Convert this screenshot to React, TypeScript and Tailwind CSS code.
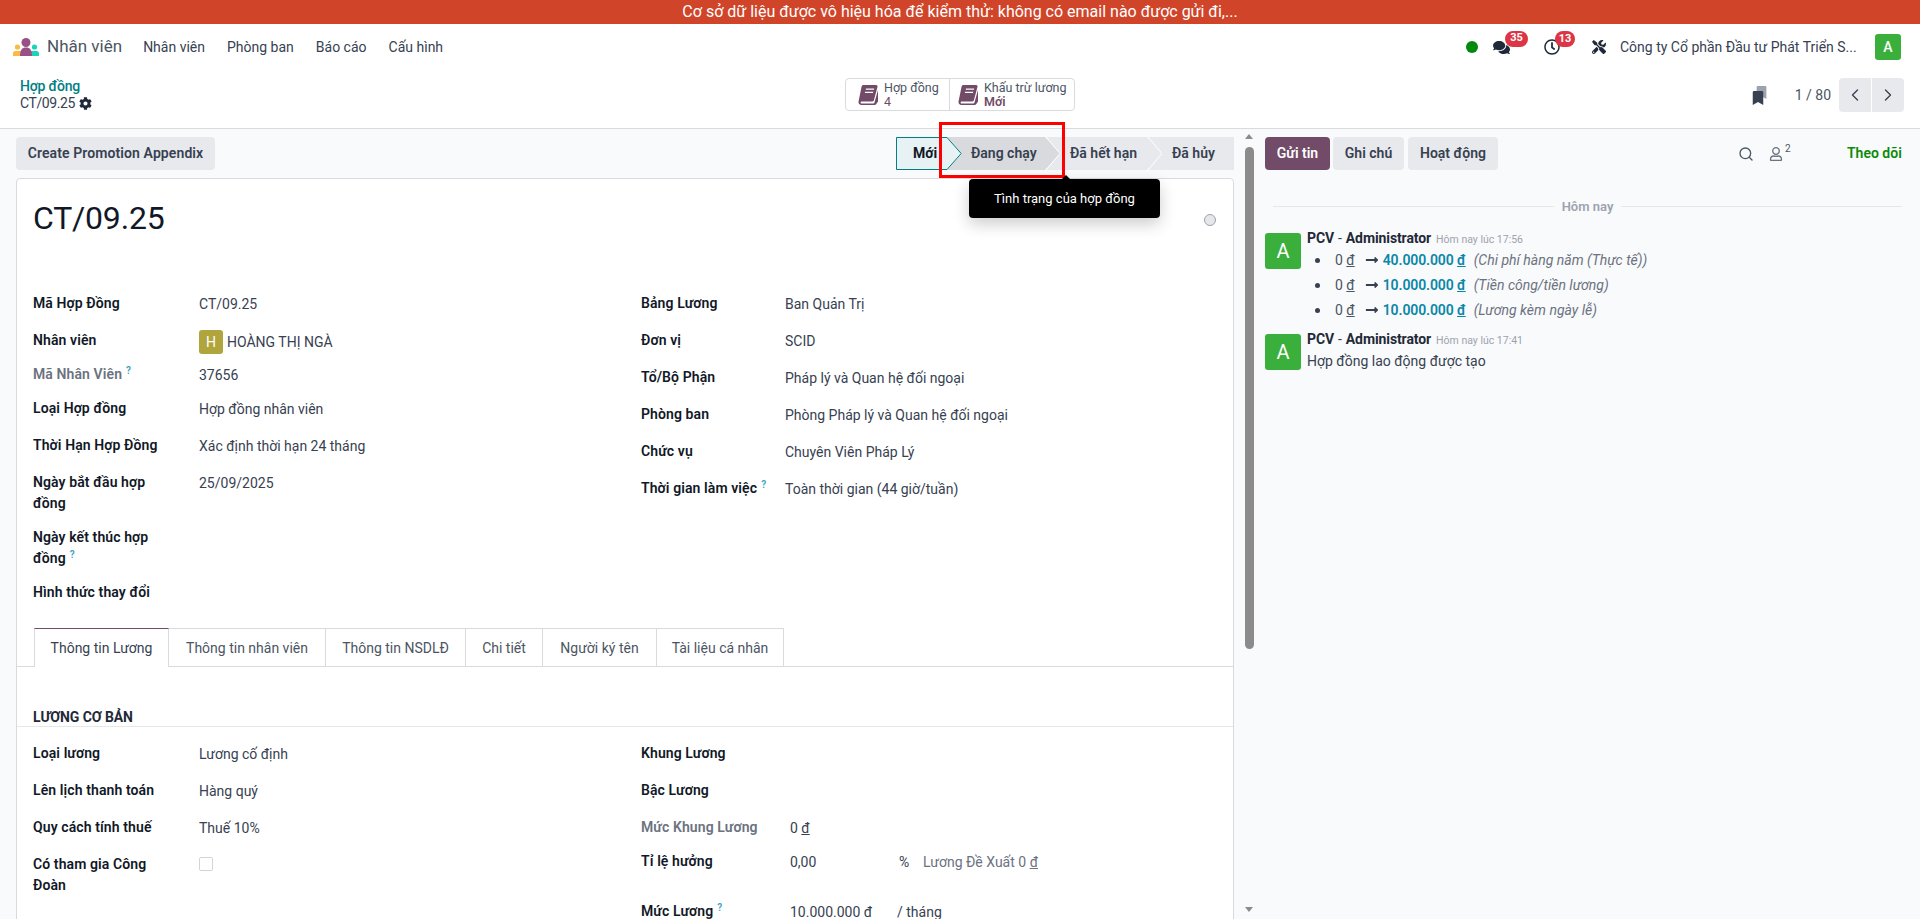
import { ChevronLeft, ChevronRight, Search } from 'lucide-react';
import { FaBookmark, FaCog, FaComments, FaLongArrowAltRight, FaRegClock, FaRegUser, FaTools } from 'react-icons/fa';

const font = { fontFamily: '"Roboto", "Noto Sans", sans-serif' };

function Logo() {
  return (
    <svg width="26" height="18" viewBox="0 0 26 18">
      <circle cx="4.5" cy="9" r="2.6" fill="#fbb945" />
      <circle cx="21.5" cy="9" r="2.6" fill="#1ad3bb" />
      <path d="M0 18v-2.5A2.5 2.5 0 0 1 2.500 13H10v5z" fill="#fbb945" />
      <path d="M26 18v-2.500A2.500 2.500 0 0 0 23.500 13H16v5z" fill="#1ad3bb" />
      <circle cx="13" cy="4.500" r="4.500" fill="#985184" />
      <path d="M7 18c0-6 2-8.500 6-8.500s6 2.500 6 8.500z" fill="#985184" />
    </svg>
  );
}

// sach nghieng, khong co san trong bo icon
function BookIcon() {
  return (
    <svg width="20" height="22" viewBox="0 0 20 22" className="shrink-0">
      <path
        fill="#714b67"
        fillRule="evenodd"
        d="M5.400 1h12.700c1 0 1.700.9 1.400 1.800l-3.600 13.500c-.2.700-.8 1.200-1.500 1.200H3.800c-.8 0-1.200.5-1.200 1s.4 1 1.200 1h11.600c.5 0 .9-.3 1-.7L20 6v11.500l-1.900 2.700c-.4.500-.9.800-1.600.8H3.500C1.600 21 .3 19.600.5 17.800L3.600 2.600C3.800 1.700 4.500 1 5.400 1zM8 4.500l-.3 1.300h8.200l.3-1.300zM7.100 7.800l-.3 1.300H15l.3-1.300z"
      />
    </svg>
  );
}

function Help() {
  return <sup className="ml-1 text-[10px] font-semibold text-[#3d9fc0]">?</sup>;
}

function Cur() {
  return <span className="underline">đ</span>;
}

function Row({ label, h, muted, help, children }: { label: string; h: string; muted?: boolean; help?: boolean; children?: React.ReactNode }) {
  return (
    <div className={`flex ${h}`}>
      <div className={`w-[166px] pr-[26px] font-semibold leading-[21px] tracking-[0.1px] ${muted ? 'text-[#6b7280]' : 'text-[#111827]'}`}>
        {label}
        {help && <Help />}
      </div>
      <div className="pt-px leading-[21px] text-[#374151]">{children}</div>
    </div>
  );
}

function RightRow({ label, h, muted, help, children, w = 'w-[144px]' }: { label: string; h: string; muted?: boolean; help?: boolean; children?: React.ReactNode; w?: string }) {
  return (
    <div className={`flex ${h}`}>
      <div className={`${w} font-semibold leading-[21px] tracking-[0.1px] ${muted ? 'text-[#6b7280]' : 'text-[#111827]'}`}>
        {label}
        {help && <Help />}
      </div>
      <div className="flex-1 pt-px leading-[21px] text-[#374151]">{children}</div>
    </div>
  );
}

function Seg({ width, tip, fill, pl, active, z, ml, children }: { width: number; tip: boolean; fill: string; pl: string; active?: boolean; z: string; ml: string; children: React.ReactNode }) {
  const w = width;
  const points = tip ? `0,0 ${w - 15},0 ${w},16.500 ${w - 15},33 0,33` : `0,0 ${w},0 ${w},33 0,33`;
  return (
    <button className={`relative h-[33px] text-left ${z} ${ml} ${pl}`} style={{ width: w }}>
      <svg className="absolute inset-0" width={w} height={33}>
        <polygon points={points} fill={fill} />
        {tip && !active && <polyline points={`${w - 14},0 ${w},16.500 ${w - 14},33`} fill="none" stroke="#ffffff" strokeWidth="1" />}
        {active && <polygon points={`0.500,0.500 ${w - 15},0.500 ${w - 0.800},16.500 ${w - 15},32.500 0.500,32.500`} fill="#e6f2f3" stroke="#017e84" strokeWidth="1" />}
      </svg>
      <span className={`relative ${active ? 'font-bold text-[#111827]' : 'font-semibold text-[#374151]'}`}>{children}</span>
    </button>
  );
}

function StatButton({ title, value, strong, w }: { title: string; value: string; strong?: boolean; w: string }) {
  return (
    <div className={`flex items-center gap-[6px] ${w}`}>
      <BookIcon />
      <div className="text-[12.5px] leading-[14px]">
        <div className="text-[#4b5563]">{title}</div>
        <div className={`text-[#714b67] ${strong ? 'font-semibold' : ''}`}>{value}</div>
      </div>
    </div>
  );
}

function Msg({ time, avatarClass, children }: { time: string; avatarClass?: string; children: React.ReactNode }) {
  return (
    <div className={`flex gap-[6px] ${avatarClass ?? ''}`}>
      <div className="flex h-[36px] w-[36px] shrink-0 items-center justify-center rounded-[3px] bg-[#3aaf3c] text-[20px] text-white">A</div>
      <div className="-mt-[5px] flex-1">
        <div className="flex items-baseline leading-[20px] tracking-[-0.1px]">
          <span className="font-bold text-[#1f2937]">PCV</span>
          <span className="mx-1 text-[#374151]">-</span>
          <span className="font-bold text-[#1f2937]">Administrator</span>
          <span className="ml-[5px] text-[10.5px] tracking-normal text-[#9ca3af]">{time}</span>
        </div>
        {children}
      </div>
    </div>
  );
}

function Change({ to, field }: { to: string; field: string }) {
  return (
    <li className="flex h-[25px] items-center text-[#4b5563]">
      <span className="ml-[8px] mr-[15px] h-[5px] w-[5px] rounded-full bg-[#374151]" />
      <span>0 <Cur /></span>
      <FaLongArrowAltRight className="ml-[10px] mr-[4px] text-[14px] text-[#374151]" />
      <span className="font-semibold tracking-[-0.1px] text-[#0a87a8]">{to} <Cur /></span>
      <span className="ml-[8px] italic text-[#6b7280]">({field})</span>
    </li>
  );
}

export default function App() {
  const tabs = [
    ['Thông tin Lương', 'w-[135px]'],
    ['Thông tin nhân viên', 'w-[157px]'],
    ['Thông tin NSDLĐ', 'w-[140px]'],
    ['Chi tiết', 'w-[77px]'],
    ['Người ký tên', 'w-[114px]'],
    ['Tài liệu cá nhân', 'w-[127px]'],
  ];

  return (
    <div className="flex h-[919px] w-[1920px] flex-col overflow-hidden bg-[#f9fafb] text-[14px] text-[#374151]" style={font}>
      <div className="flex h-[24px] shrink-0 items-center justify-center bg-[#d0452a] text-[16px] text-white">
        Cơ sở dữ liệu được vô hiệu hóa để kiểm thử: không có email nào được gửi đi,...
      </div>

      <header className="flex h-[46px] shrink-0 items-center bg-white pl-[13px] pr-[19px]">
        <Logo />
        <span className="ml-[8px] text-[17px] text-[#4b5563]">Nhân viên</span>
        <nav className="ml-[21px] flex gap-[22px] text-[#374151]">
          <span>Nhân viên</span>
          <span>Phòng ban</span>
          <span>Báo cáo</span>
          <span>Cấu hình</span>
        </nav>
        <div className="ml-auto flex items-center">
          <span className="h-[12px] w-[12px] rounded-full bg-[#008a0e]" />
          <div className="relative ml-[15px] w-[51px]">
            <FaComments className="text-[17px] text-[#1f2937]" />
            <span className="absolute -top-[8px] left-[12px] flex h-[16px] w-[23px] items-center justify-center rounded-full bg-[#dc3545] text-[11px] font-bold text-white">35</span>
          </div>
          <div className="relative w-[48px]">
            <FaRegClock className="text-[16px] text-[#1f2937]" />
            <span className="absolute -top-[8px] left-[11px] flex h-[16px] w-[20px] items-center justify-center rounded-full bg-[#dc3545] text-[11px] font-bold text-white">13</span>
          </div>
          <FaTools className="text-[14px] text-[#1f2937]" />
          <span className="ml-[14px] w-[255px] text-[#374151]">Công ty Cổ phần Đầu tư Phát Triển S...</span>
          <div className="flex h-[26px] w-[26px] items-center justify-center rounded-[3px] bg-[#3aaf3c] text-[14px] font-medium text-white">A</div>
        </div>
      </header>

      <div className="flex h-[59px] shrink-0 items-start border-b border-[#d8dadd] bg-white pl-[20px] pr-[16px]">
        <div className="w-[825px] pt-[8px] leading-[17px]">
          <div className="font-medium tracking-[-0.2px] text-[#017e84]">Hợp đồng</div>
          <div className="flex items-center gap-[4px] text-[#374151]">
            <span className="tracking-[-0.4px]">CT/09.25</span> <FaCog className="text-[13px] text-[#1f2937]" />
          </div>
        </div>
        <div className="mt-[8px] flex h-[33px] w-[230px] rounded-[4px] border border-[#d8dadd]">
          <StatButton title="Hợp đồng" value="4" w="w-[104px] border-r border-[#d8dadd] pl-[12px]" />
          <StatButton title="Khấu trừ lương" value="Mới" strong w="flex-1 pl-[8px]" />
        </div>
        <div className="ml-auto mt-[8px] flex h-[34px] items-center">
          <div className="relative mr-[30px] h-[19px] w-[14px]">
            <FaBookmark className="absolute left-[4px] top-0 text-[13px] text-[#9ca3af]" />
            <FaBookmark className="absolute left-0 top-[5px] text-[14px] text-[#374151]" />
          </div>
          <span className="mr-[8px] text-[#4b5563]">1 / 80</span>
          <div className="flex h-[34px] w-[65px] overflow-hidden rounded-[4px]">
            <div className="flex w-[32px] items-center justify-center bg-[#e7e9ed]"><ChevronLeft size={20} strokeWidth={1.6} /></div>
            <div className="ml-px flex flex-1 items-center justify-center bg-[#e7e9ed]"><ChevronRight size={20} strokeWidth={1.6} /></div>
          </div>
        </div>
      </div>

      <div className="flex min-h-0 flex-1">
        <main className="relative w-[1242px] shrink-0 pl-[16px] pr-[8px] pt-[8px]">
          <div className="flex h-[33px] items-center justify-between">
            <button className="h-[33px] w-[199px] rounded-[4px] bg-[#e7e9ed] font-semibold tracking-[0.1px] text-[#374151]">Create Promotion Appendix</button>
            <div className="relative flex items-center">
              <Seg width={66} tip active fill="#e6f2f3" pl="pl-[17px]" z="z-30" ml="">Mới</Seg>
              <Seg width={113} tip fill="#d8dadd" pl="pl-[24px]" z="z-20" ml="-ml-[15px]">Đang chạy</Seg>
              <Seg width={115} tip fill="#e7e9ed" pl="pl-[23px]" z="z-10" ml="-ml-[13px]">Đã hết hạn</Seg>
              <Seg width={85} tip={false} fill="#e7e9ed" pl="pl-[23px]" z="z-0" ml="-ml-[13px]">Đã hủy</Seg>
              <div className="absolute left-[43px] top-[-15px] z-40 h-[56px] w-[126px] border-[3px] border-[#ff0000]" />
              <div className="absolute left-[73px] top-[42px] z-40 flex h-[39px] w-[191px] items-center justify-center rounded-[4px] bg-black text-[13px] text-white shadow-[0_6px_16px_rgba(0,0,0,0.2)]">
                Tình trạng của hợp đồng
              </div>
              <div className="absolute left-[165px] top-[38px] z-40 h-0 w-0 border-x-[5px] border-b-[5px] border-x-transparent border-b-black" />
            </div>
          </div>

          <div className="mt-[8px] h-[800px] rounded-t-[4px] border border-[#d8dadd] bg-white">
            <div className="relative h-[114px] pl-[16px] pt-[19px]">
              <h1 className="text-[32px] leading-[40px] tracking-[-0.2px] text-[#111827]">CT/09.25</h1>
              <span className="absolute right-[17px] top-[35px] h-[12px] w-[12px] rounded-full border border-[#9ca3af] bg-[#e5e7eb]" />
            </div>

            <div className="flex h-[335px] pl-[16px]">
              <div className="w-[608px]">
                <Row label="Mã Hợp Đồng" h="h-[37px]">CT/09.25</Row>
                <Row label="Nhân viên" h="h-[34px]">
                  <div className="-mt-px flex items-center gap-[4px]">
                    <span className="flex h-[24px] w-[24px] items-center justify-center rounded-[3px] bg-[#b0a53c] text-white">H</span>
                    HOÀNG THỊ NGÀ
                  </div>
                </Row>
                <Row label="Mã Nhân Viên" h="h-[34px]" muted help>37656</Row>
                <Row label="Loại Hợp đồng" h="h-[37px]">Hợp đồng nhân viên</Row>
                <Row label="Thời Hạn Hợp Đồng" h="h-[37px]">Xác định thời hạn 24 tháng</Row>
                <Row label="Ngày bắt đầu hợp đồng" h="h-[55px]">25/09/2025</Row>
                <Row label="Ngày kết thúc hợp đồng" h="h-[55px]" help />
                <Row label="Hình thức thay đổi" h="h-[34px]" />
              </div>
              <div className="flex-1">
                <RightRow label="Bảng Lương" h="h-[37px]">Ban Quản Trị</RightRow>
                <RightRow label="Đơn vị" h="h-[37px]">SCID</RightRow>
                <RightRow label="Tổ/Bộ Phận" h="h-[37px]">Pháp lý và Quan hệ đối ngoại</RightRow>
                <RightRow label="Phòng ban" h="h-[37px]">Phòng Pháp lý và Quan hệ đối ngoại</RightRow>
                <RightRow label="Chức vụ" h="h-[37px]">Chuyên Viên Pháp Lý</RightRow>
                <RightRow label="Thời gian làm việc" h="h-[37px]" help>Toàn thời gian (44 giờ/tuần)</RightRow>
              </div>
            </div>

            <div className="flex h-[39px] border-b border-[#d8dadd] pl-[17px]">
              {tabs.map(([name, w], i) => (
                <div
                  key={name}
                  className={`flex h-[39px] items-center justify-center border-r border-t border-[#d8dadd] ${w} ${i === 0 ? 'border-l border-t-[#714b67] bg-white text-[#374151]' : 'text-[#4b5563]'}`}
                >
                  {name}
                </div>
              ))}
            </div>

            <div className="mt-[41px] border-b border-[#e5e7eb] pl-[16px] text-[14px] font-bold leading-[18px] tracking-[-0.1px] text-[#1f2937]">LƯƠNG CƠ BẢN</div>

            <div className="flex pl-[16px] pt-[16px]">
              <div className="w-[608px]">
                <Row label="Loại lương" h="h-[37px]">Lương cố định</Row>
                <Row label="Lên lịch thanh toán" h="h-[37px]">Hàng quý</Row>
                <Row label="Quy cách tính thuế" h="h-[37px]">Thuế 10%</Row>
                <Row label="Có tham gia Công Đoàn" h="h-[55px]">
                  <div className="mt-[2px] h-[14px] w-[14px] rounded-[2px] border border-[#d1d5db]" />
                </Row>
              </div>
              <div className="flex-1">
                <RightRow label="Khung Lương" h="h-[37px]" w="w-[149px]" />
                <RightRow label="Bậc Lương" h="h-[37px]" w="w-[149px]" />
                <RightRow label="Mức Khung Lương" h="h-[34px]" muted w="w-[149px]">0 <Cur /></RightRow>
                <RightRow label="Tỉ lệ hưởng" h="h-[50px]" w="w-[149px]">
                  <div className="flex">
                    <span className="w-[109px]">0,00</span>
                    <span className="w-[24px]">%</span>
                    <span className="text-[#6b7280]">Lương Đề Xuất 0 <Cur /></span>
                  </div>
                </RightRow>
                <RightRow label="Mức Lương" h="h-[37px]" help w="w-[149px]">
                  <div className="flex">
                    <span className="w-[107px]">10.000.000 đ</span>
                    <span>/ tháng</span>
                  </div>
                </RightRow>
              </div>
            </div>
          </div>
        </main>

        <div className="relative w-[14px] shrink-0 pt-[18px]">
          <div className="ml-[3px] h-[502px] w-[9px] rounded-full bg-[#8b8b8b]" />
          <div className="absolute left-[3px] top-[5px] h-0 w-0 border-x-[4.5px] border-b-[5px] border-x-transparent border-b-[#8b8b8b]" />
          <div className="absolute left-[3px] top-[778px] h-0 w-0 border-x-[4.5px] border-t-[5px] border-x-transparent border-t-[#8b8b8b]" />
        </div>

        <aside className="min-w-0 flex-1 pl-[9px] pr-[18px] pt-[8px]">
          <div className="flex h-[33px] items-center">
            <button className="h-[33px] w-[65px] rounded-[4px] bg-[#714b67] font-semibold text-white">Gửi tin</button>
            <button className="ml-[3px] h-[33px] w-[71px] rounded-[4px] bg-[#e7e9ed] font-semibold text-[#374151]">Ghi chú</button>
            <button className="ml-[4px] h-[33px] w-[90px] rounded-[4px] bg-[#e7e9ed] font-semibold text-[#374151]">Hoạt động</button>
            <Search size={16} strokeWidth={2} className="ml-[240px] text-[#4b5563]" />
            <div className="relative ml-[15px] flex w-[78px] items-center">
              <FaRegUser className="text-[14px] text-[#6b7280]" />
              <span className="absolute left-[16px] top-[-6px] text-[10px] text-[#4b5563]">2</span>
            </div>
            <span className="whitespace-nowrap font-semibold text-[#0a8a0a]">Theo dõi</span>
          </div>

          <div className="mt-[27px] flex items-center gap-[8px] pl-[8px]">
            <div className="h-px flex-1 bg-[#e5e7eb]" />
            <span className="text-[13px] font-semibold text-[#9ca3af]">Hôm nay</span>
            <div className="h-px flex-1 bg-[#e5e7eb]" />
          </div>

          <div className="mt-[16px]">
            <Msg time="Hôm nay lúc 17:56">
              <ul className="mt-[-2px]">
                <Change to="40.000.000" field="Chi phí hàng năm (Thực tế)" />
                <Change to="10.000.000" field="Tiền công/tiền lương" />
                <Change to="10.000.000" field="Lương kèm ngày lễ" />
              </ul>
            </Msg>
            <Msg time="Hôm nay lúc 17:41" avatarClass="mt-[11px]">
              <p className="leading-[21px] text-[#374151]">Hợp đồng lao động được tạo</p>
            </Msg>
          </div>
        </aside>
      </div>
    </div>
  );
}
